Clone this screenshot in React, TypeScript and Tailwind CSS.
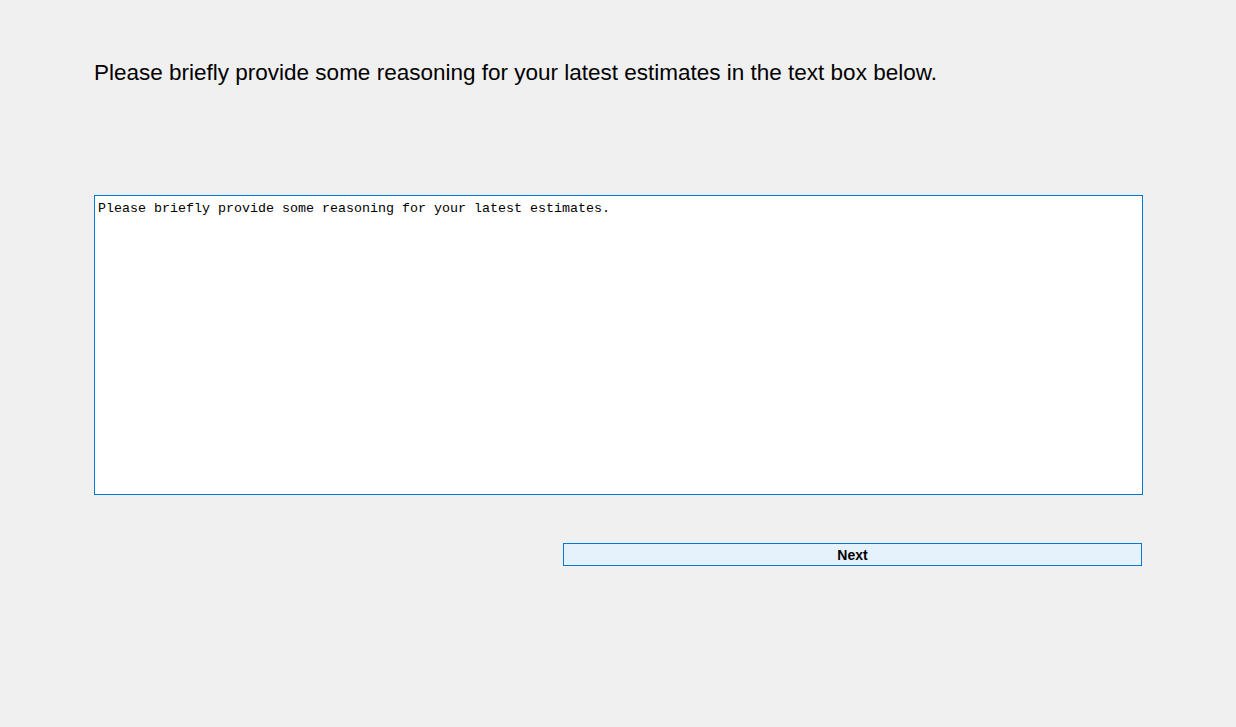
export default function App() {
  return (
    <div className="w-[1236px] h-[727px] bg-[#f0f0f0] overflow-hidden">
      <div className="pl-[94px] pt-[60px]">
        <h1 className="text-[22.5px] leading-[26px] text-black whitespace-nowrap" style={{ fontFamily: '"Liberation Sans", Arial, sans-serif' }}>
          Please briefly provide some reasoning for your latest estimates in the text box below.
        </h1>
        <div
          className="mt-[109px] w-[1049px] h-[300px] bg-white border border-[#0078d7] px-[3px] pt-[5px] text-[13.33px] leading-[16px] text-black"
          style={{ fontFamily: '"Liberation Mono", "Courier New", monospace' }}
        >
          Please briefly provide some reasoning for your latest estimates.
        </div>
        <div className="mt-[48px] pl-[469px]">
          <button
            className="w-[579px] h-[23px] bg-[#e5f1fb] border border-[#0078d7] flex items-center justify-center pt-[1px] text-[14px] font-bold text-black"
            style={{ fontFamily: '"Liberation Sans", Arial, sans-serif' }}
          >
            Next
          </button>
        </div>
      </div>
    </div>
  );
}
